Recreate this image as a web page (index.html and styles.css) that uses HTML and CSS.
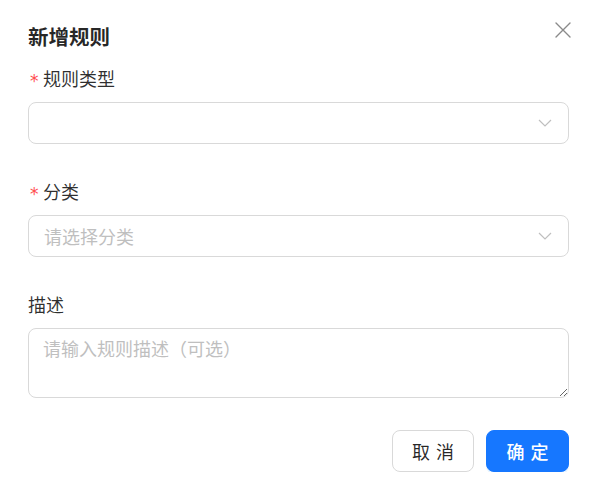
FILE: index.html
```html
<!DOCTYPE html>
<html lang="zh-CN">
<head>
<meta charset="utf-8">
<title>新增规则</title>
<link rel="stylesheet" href="styles.css">
</head>
<body>
<div class="modal">
  <div class="modal-header">
    <div class="modal-title">新增规则</div>
    <button class="modal-close" type="button" aria-label="关闭">
      <svg width="16" height="16" viewBox="0 0 16 16" fill="none" stroke="currentColor" stroke-width="1.4" stroke-linecap="round">
        <path d="M1 1L15 15M15 1L1 15"/>
      </svg>
    </button>
  </div>
  <form class="form">
    <div class="form-item">
      <label class="form-label"><span class="required">*</span>规则类型</label>
      <div class="select">
        <span class="select-value"></span>
        <svg class="select-arrow" width="14" height="8" viewBox="0 0 14 8" fill="none" stroke="currentColor" stroke-width="1.2"><path d="M1 1L7 7L13 1"/></svg>
      </div>
    </div>
    <div class="form-item">
      <label class="form-label"><span class="required">*</span>分类</label>
      <div class="select">
        <span class="select-placeholder">请选择分类</span>
        <svg class="select-arrow" width="14" height="8" viewBox="0 0 14 8" fill="none" stroke="currentColor" stroke-width="1.2"><path d="M1 1L7 7L13 1"/></svg>
      </div>
    </div>
    <div class="form-item form-item-last">
      <label class="form-label">描述</label>
      <textarea class="textarea" placeholder="请输入规则描述（可选）"></textarea>
    </div>
    <div class="footer">
      <button type="button" class="btn btn-default"><span class="btn-text">取消</span></button>
      <button type="button" class="btn btn-primary"><span class="btn-text">确定</span></button>
    </div>
  </form>
</div>
</body>
</html>
```

FILE: styles.css
```css
* { box-sizing: border-box; }
html, body { margin: 0; background: #fff; }
body {
  font-family: "Noto Sans CJK SC", "Noto Sans", sans-serif;
  color: rgba(0, 0, 0, 0.88);
}
.modal {
  position: relative;
  width: 591px;
  padding: 22px 22px 0 28px;
}
.modal-header {
  margin-bottom: 15px;
}
.modal-title {
  font-size: 20.5px;
  line-height: 28px;
  font-weight: 700;
  color: rgba(0, 0, 0, 0.85);
}
.modal-close {
  position: absolute;
  top: 14px;
  right: 12px;
  width: 32px;
  height: 32px;
  padding: 0;
  border: 0;
  background: transparent;
  color: #8a8a8a;
  display: flex;
  align-items: center;
  justify-content: center;
}
.form-item {
  margin-bottom: 34px;
}
.form-item-last {
  margin-bottom: 32px;
}
.form-label {
  display: flex;
  align-items: center;
  height: 26px;
  margin-bottom: 11px;
  font-size: 18px;
  line-height: 26px;
  color: rgba(0, 0, 0, 0.82);
}
.required {
  font-family: "DejaVu Sans", sans-serif;
  color: #ff4d4f;
  font-size: 17px;
  line-height: 1;
  width: 15px;
  padding-left: 2px;
  margin-top: 7px;
}
.select {
  height: 42px;
  border: 1px solid #d9d9d9;
  border-radius: 8px;
  padding: 0 16px 0 15px;
  display: flex;
  align-items: center;
  justify-content: space-between;
  font-size: 18px;
}
.select-placeholder {
  color: #bfbfbf;
}
.select-arrow {
  color: #bfbfbf;
}
.textarea {
  display: block;
  width: 100%;
  height: 70px;
  border: 1px solid #d9d9d9;
  border-radius: 8px;
  padding: 6px 14px;
  font-family: inherit;
  font-size: 18px;
  line-height: 26px;
  color: rgba(0, 0, 0, 0.88);
  resize: vertical;
  outline: none;
  background: #fff;
}
.textarea::placeholder {
  color: #bfbfbf;
}
.footer {
  display: flex;
  justify-content: flex-end;
  gap: 12px;
}
.btn {
  height: 42px;
  padding: 0;
  border-radius: 8px;
  font-family: inherit;
  font-size: 18px;
  line-height: 26px;
  display: flex;
  align-items: center;
  justify-content: center;
}
.btn-text {
  letter-spacing: 0.34em;
  margin-right: -0.34em;
}
.btn-default {
  width: 82px;
  background: #fff;
  border: 1px solid #d9d9d9;
  color: rgba(0, 0, 0, 0.85);
}
.btn-primary {
  width: 83px;
  background: #1677ff;
  border: 1px solid #1677ff;
  color: #fff;
  font-weight: 500;
  box-shadow: 0 2px 0 rgba(5, 145, 255, 0.1);
}
```
